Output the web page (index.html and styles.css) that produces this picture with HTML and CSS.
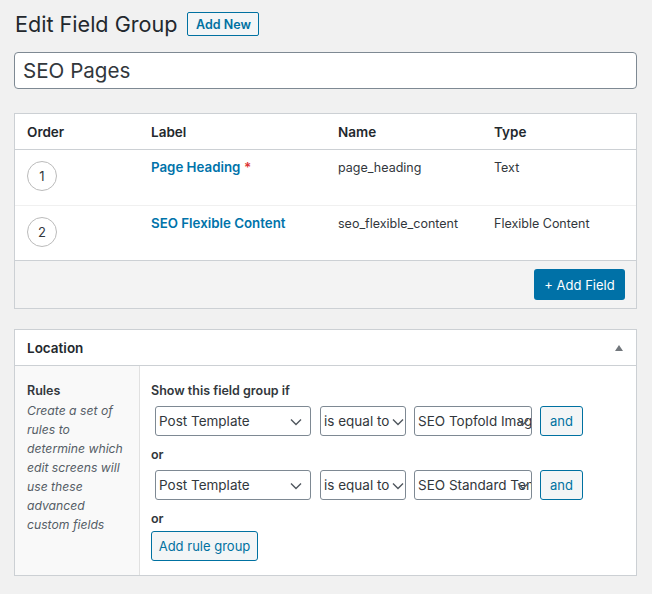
FILE: index.html
```html
<!DOCTYPE html>
<html>
<head>
<meta charset="utf-8">
<link rel="stylesheet" href="styles.css">
</head>
<body>
<div class="wrap">
  <div class="head">
    <h1 class="title">Edit Field Group</h1>
    <span class="btn-outline">Add New</span>
  </div>
  <div class="title-input">SEO Pages</div>

  <div class="box fields">
    <div class="grid hdr">
      <div class="c">Order</div>
      <div class="c">Label</div>
      <div class="c">Name</div>
      <div class="c">Type</div>
    </div>
    <div class="grid row">
      <div class="c"><span class="circle">1</span></div>
      <div class="c"><span class="lbl">Page Heading</span> <span class="req">*</span></div>
      <div class="c">page_heading</div>
      <div class="c">Text</div>
    </div>
    <div class="grid row">
      <div class="c"><span class="circle">2</span></div>
      <div class="c"><span class="lbl">SEO Flexible Content</span></div>
      <div class="c">seo_flexible_content</div>
      <div class="c">Flexible Content</div>
    </div>
    <div class="foot">
      <span class="btn-primary">+ Add Field</span>
    </div>
  </div>

  <div class="box loc">
    <div class="loc-head">
      <span>Location</span>
      <span class="tri"></span>
    </div>
    <div class="loc-body">
      <div class="side">
        <div class="side-title">Rules</div>
        <div class="side-desc">Create a set of rules to determine which edit screens will use these advanced custom fields</div>
      </div>
      <div class="main">
        <div class="sub">Show this field group if</div>
        <div class="rule">
          <div class="sel s1"><span class="val">Post Template</span><svg class="chev" width="12" height="8" viewBox="0 0 12 8"><path d="M1 1.5 L6 6.5 L11 1.5" fill="none" stroke="#50575e" stroke-width="1.4"/></svg></div>
          <div class="sel s2"><span class="val">is equal to</span><svg class="chev" width="12" height="8" viewBox="0 0 12 8"><path d="M1 1.5 L6 6.5 L11 1.5" fill="none" stroke="#50575e" stroke-width="1.4"/></svg></div>
          <div class="sel s3"><span class="val">SEO Topfold Image</span><svg class="chev" width="12" height="8" viewBox="0 0 12 8"><path d="M1 1.5 L6 6.5 L11 1.5" fill="none" stroke="#50575e" stroke-width="1.4"/></svg></div>
          <span class="btn-and">and</span>
        </div>
        <div class="sub or">or</div>
        <div class="rule">
          <div class="sel s1"><span class="val">Post Template</span><svg class="chev" width="12" height="8" viewBox="0 0 12 8"><path d="M1 1.5 L6 6.5 L11 1.5" fill="none" stroke="#50575e" stroke-width="1.4"/></svg></div>
          <div class="sel s2"><span class="val">is equal to</span><svg class="chev" width="12" height="8" viewBox="0 0 12 8"><path d="M1 1.5 L6 6.5 L11 1.5" fill="none" stroke="#50575e" stroke-width="1.4"/></svg></div>
          <div class="sel s3"><span class="val">SEO Standard Template</span><svg class="chev" width="12" height="8" viewBox="0 0 12 8"><path d="M1 1.5 L6 6.5 L11 1.5" fill="none" stroke="#50575e" stroke-width="1.4"/></svg></div>
          <span class="btn-and">and</span>
        </div>
        <div class="sub or">or</div>
        <div class="btn-group">Add rule group</div>
      </div>
    </div>
  </div>
</div>
</body>
</html>
```

FILE: styles.css
```css
* { box-sizing: border-box; }
html, body { margin: 0; padding: 0; }
body {
  background: #f1f1f1;
  font-family: Inter, "Liberation Sans", sans-serif;
  color: #23282d;
  font-size: 13px;
}
.wrap { padding: 10px 15px 0 14px; width: 652px; }

.head { display: flex; align-items: center; height: 28px; }
.title { margin: 0; font-size: 21.6px; font-weight: 400; color: #23282d; line-height: 28px; padding-left: 1px; }
.btn-outline {
  margin-left: 10px;
  display: inline-flex; align-items: center; justify-content: center;
  height: 24px; width: 72px;
  border: 1px solid #0071a1; border-radius: 2px;
  background: #f3f5f6; color: #0071a1;
  font-size: 12.5px; font-weight: 600;
}

.title-input {
  margin-top: 14px;
  height: 37px;
  background: #fff;
  border: 1px solid #7e8993;
  border-radius: 4px;
  padding: 0 8px;
  font-size: 20.6px;
  line-height: 35px;
  color: #32373c;
}

.box { background: #fff; border: 1px solid #ccd0d4; }
.fields { margin-top: 24px; }

.grid { display: grid; grid-template-columns: 124px 187px 156px 1fr; }
.c { padding-left: 12px; }
.hdr { height: 36px; align-items: center; font-size: 13.5px; font-weight: 600; border-bottom: 1px solid #ccd0d4; }
.row { height: 55px; padding-top: 9px; color: #32373c; font-size: 12.5px; line-height: 17px; }
.row + .row { border-top: 1px solid #f0f0f0; }
.circle {
  display: inline-flex; align-items: center; justify-content: center;
  width: 30px; height: 30px; margin-top: 2px;
  border: 1px solid #bbb; border-radius: 50%;
  font-size: 13px; color: #32373c;
}
.lbl { color: #0073aa; font-weight: 600; font-size: 13.3px; }
.req { color: #dc3232; font-weight: 600; font-size: 13.5px; }

.foot {
  background: #f3f3f3;
  border-top: 1px solid #ccd0d4;
  height: 48px;
  display: flex; justify-content: flex-end; align-items: center;
  padding-right: 11px;
}
.btn-primary {
  display: inline-flex; align-items: center; justify-content: center;
  width: 91px; height: 31px;
  background: #0071a7; color: #fff;
  border-radius: 3px;
  font-size: 13px;
}

.loc { margin-top: 20px; }
.loc-head {
  height: 36px;
  display: flex; align-items: center; justify-content: space-between;
  padding: 0 13px 0 12px;
  border-bottom: 1px solid #ccd0d4;
  font-size: 13.5px; font-weight: 600;
}
.tri {
  width: 0; height: 0;
  border-left: 4.5px solid transparent;
  border-right: 4.5px solid transparent;
  border-bottom: 6px solid #72777c;
}
.loc-body { display: flex; }
.side {
  width: 125px;
  background: #f9f9f9;
  border-right: 1px solid #e1e1e1;
  padding: 16px 13px 0 12px;
}
.side-title { font-weight: 600; font-size: 12.5px; line-height: 18px; color: #32373c; }
.side-desc { font-style: italic; font-size: 12.2px; line-height: 19px; color: #555d66; margin-top: 1px; }
.main { flex: 1; padding: 16px 11px 14px 11px; }
.sub { font-weight: 600; font-size: 12.5px; line-height: 18px; color: #32373c; }
.sub.or { margin-top: 10px; }
.rule { display: flex; align-items: center; margin: 6px 0 0 4px; height: 30px; }
.sel {
  position: relative;
  height: 30px;
  border: 1px solid #7e8993;
  border-radius: 3px;
  background: #fff;
  font-size: 13.5px;
  color: #32373c;
  padding-left: 3px;
  line-height: 28px;
  overflow: hidden;
  white-space: nowrap;
}
.s1 { width: 156px; }
.s2 { width: 86px; margin-left: 9px; }
.s3 { width: 118px; margin-left: 8px; }
.chev { position: absolute; right: 8px; top: 11px; }
.s2 .chev { right: 1px; }
.s3 .chev { right: 2px; }
.btn-and {
  margin-left: 8px;
  display: inline-flex; align-items: center; justify-content: center;
  width: 43px; height: 30px;
  border: 1px solid #0071a1; border-radius: 3px;
  background: #f3f5f6; color: #0071a1;
  font-size: 13px;
}
.btn-group {
  margin-top: 3px;
  display: flex; align-items: center; justify-content: center;
  width: 107px; height: 30px;
  border: 1px solid #0071a1; border-radius: 3px;
  background: #f3f5f6; color: #0071a1;
  font-size: 13px;
}
```
